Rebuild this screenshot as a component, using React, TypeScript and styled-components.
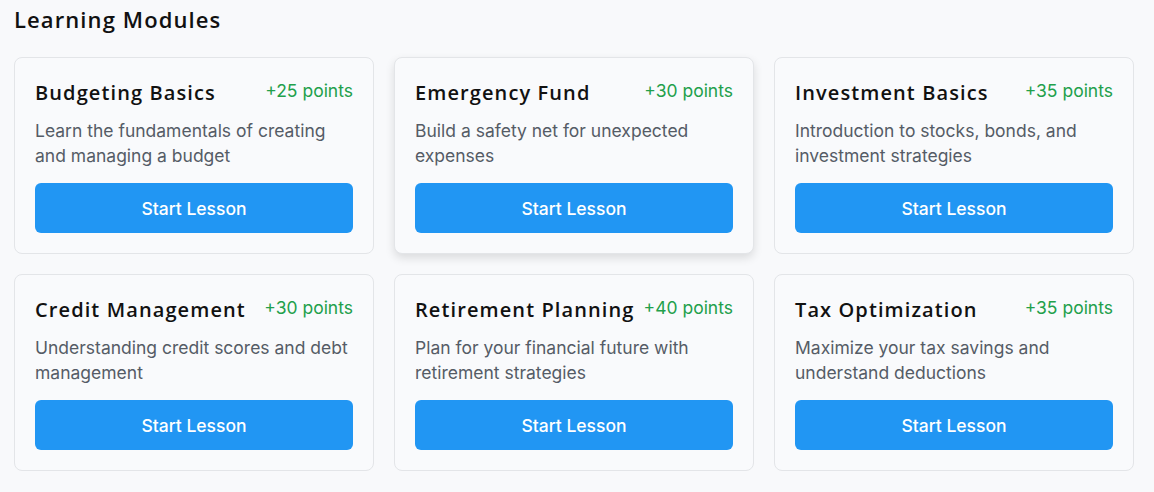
import React from "react";
import styled, { createGlobalStyle } from "styled-components";

const Global = createGlobalStyle`
  html, body { margin: 0; padding: 0; background: #f8f9fb; }
  body { font-family: Inter, "Liberation Sans", sans-serif; }
`;

const Page = styled.div`
  padding: 4px 20px 20px 14px;
`;

const Heading = styled.h2`
  margin: 0 0 23px 0;
  font-family: "Open Sans", "Liberation Sans", sans-serif;
  font-size: 22px;
  font-weight: 600;
  letter-spacing: 1.1px;
  line-height: 30px;
  color: #111;
`;

const Grid = styled.div`
  display: grid;
  grid-template-columns: repeat(3, 360px);
  column-gap: 20px;
  row-gap: 20px;
`;

const Card = styled.div<{ $raised?: boolean }>`
  box-sizing: border-box;
  background: #f9fafc;
  border: 1px solid #e3e5e8;
  border-radius: 8px;
  padding: 20px;
  box-shadow: ${(p) => (p.$raised ? "0 4px 10px rgba(0,0,0,0.12)" : "none")};
`;

const Header = styled.div`
  display: flex;
  justify-content: space-between;
  align-items: flex-start;
  margin-bottom: 10px;
`;

const Title = styled.h3`
  margin: 0;
  font-family: "Open Sans", "Liberation Sans", sans-serif;
  font-size: 20px;
  font-weight: 600;
  letter-spacing: 1.1px;
  line-height: 30px;
  color: #111;
`;

const Points = styled.span`
  font-size: 17.5px;
  line-height: 26px;
  color: #22a04b;
  font-weight: 400;
`;

const Desc = styled.p`
  margin: 0 0 15px 0;
  font-size: 17.5px;
  line-height: 25px;
  color: #555c66;
`;

const Button = styled.button`
  display: block;
  width: 100%;
  height: 50px;
  border: none;
  border-radius: 6px;
  background: #2196f3;
  color: #fff;
  font-family: Inter, "Liberation Sans", sans-serif;
  font-size: 17.5px;
  font-weight: 500;
  cursor: pointer;
`;

const modules = [
  { title: "Budgeting Basics", points: 25, desc: "Learn the fundamentals of creating and managing a budget" },
  { title: "Emergency Fund", points: 30, desc: "Build a safety net for unexpected expenses", raised: true },
  { title: "Investment Basics", points: 35, desc: "Introduction to stocks, bonds, and investment strategies" },
  { title: "Credit Management", points: 30, desc: "Understanding credit scores and debt management" },
  { title: "Retirement Planning", points: 40, desc: "Plan for your financial future with retirement strategies" },
  { title: "Tax Optimization", points: 35, desc: "Maximize your tax savings and understand deductions" },
];

export default function App() {
  return (
    <>
      <Global />
      <Page>
        <Heading>Learning Modules</Heading>
        <Grid>
          {modules.map((m) => (
            <Card key={m.title} $raised={m.raised}>
              <Header>
                <Title>{m.title}</Title>
                <Points>+{m.points} points</Points>
              </Header>
              <Desc>{m.desc}</Desc>
              <Button>Start Lesson</Button>
            </Card>
          ))}
        </Grid>
      </Page>
    </>
  );
}
